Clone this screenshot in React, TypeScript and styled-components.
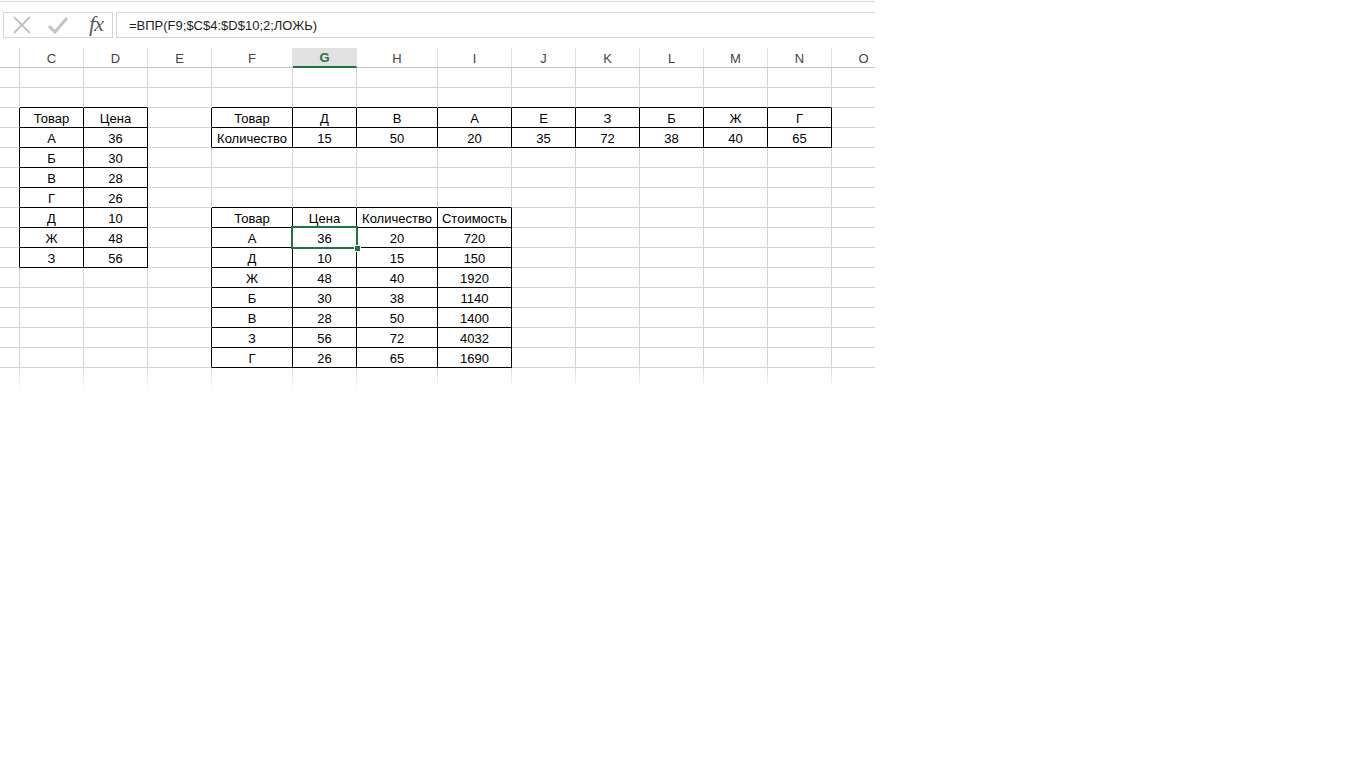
import { createGlobalStyle } from 'styled-components'
import styled from 'styled-components'

const GlobalStyle = createGlobalStyle`
	html, body {
		margin: 0;
		padding: 0;
		background: #ffffff;
	}
	body {
		font-family: 'Liberation Sans', Arial, sans-serif;
	}
`

const GRID = '#d4d4d4'
const GREEN = '#217346'

type Col = { key: string; width: number }

const columns: Col[] = [
	{ key: 'B', width: 20 },
	{ key: 'C', width: 64 },
	{ key: 'D', width: 64 },
	{ key: 'E', width: 64 },
	{ key: 'F', width: 81 },
	{ key: 'G', width: 64 },
	{ key: 'H', width: 81 },
	{ key: 'I', width: 74 },
	{ key: 'J', width: 64 },
	{ key: 'K', width: 64 },
	{ key: 'L', width: 64 },
	{ key: 'M', width: 64 },
	{ key: 'N', width: 64 },
	{ key: 'O', width: 64 },
]

const ROWS = 16
const SELECTED = 'G9'

const values: Record<string, string> = {}

function fillRow(startCol: number, row: number, items: string[]) {
	items.forEach((v, i) => {
		values[columns[startCol + i].key + row] = v
	})
}

fillRow(1, 3, ['Товар', 'Цена'])
;[
	['А', '36'],
	['Б', '30'],
	['В', '28'],
	['Г', '26'],
	['Д', '10'],
	['Ж', '48'],
	['З', '56'],
].forEach((r, i) => fillRow(1, 4 + i, r))

fillRow(4, 3, ['Товар', 'Д', 'В', 'А', 'Е', 'З', 'Б', 'Ж', 'Г'])
fillRow(4, 4, ['Количество', '15', '50', '20', '35', '72', '38', '40', '65'])

fillRow(4, 8, ['Товар', 'Цена', 'Количество', 'Стоимость'])
;[
	['А', '36', '20', '720'],
	['Д', '10', '15', '150'],
	['Ж', '48', '40', '1920'],
	['Б', '30', '38', '1140'],
	['В', '28', '50', '1400'],
	['З', '56', '72', '4032'],
	['Г', '26', '65', '1690'],
].forEach((r, i) => fillRow(4, 9 + i, r))

// bordered ranges: [colFrom, colTo, rowFrom, rowTo]
const tables = [
	[1, 2, 3, 10],
	[4, 12, 3, 4],
	[4, 7, 8, 15],
]

function inTable(c: number, r: number) {
	return tables.some(([c0, c1, r0, r1]) => c >= c0 && c <= c1 && r >= r0 && r <= r1)
}

const Page = styled.div`
	width: 875px;
	overflow: hidden;
	background: #fff;
`

const TopLine = styled.div`
	height: 1px;
	margin-top: 1px;
	background: #dadada;
`

const FormulaBar = styled.div`
	display: flex;
	align-items: stretch;
	gap: 3px;
	height: 26px;
	margin: 10px 0 10px 3px;
`

const ButtonBox = styled.div`
	display: flex;
	align-items: center;
	width: 110px;
	border: 1px solid #d6d6d6;
	box-sizing: border-box;
	background: #fff;
`

const IconSlot = styled.div`
	width: 36px;
	display: flex;
	align-items: center;
	justify-content: center;
`

const Fx = styled.span`
	font-family: 'Liberation Serif', 'Times New Roman', serif;
	font-style: italic;
	font-size: 22px;
	color: #5a5a5a;
	letter-spacing: -1px;
	margin-left: 4px;
	margin-top: -3px;
`

const FormulaInput = styled.div`
	flex: 1;
	display: flex;
	align-items: center;
	padding-left: 12px;
	border: 1px solid #d6d6d6;
	border-right: none;
	font-size: 13px;
	color: #1e1e1e;
`

const Sheet = styled.div<{ $template: string }>`
	display: grid;
	grid-template-columns: ${({ $template }) => $template};
	grid-auto-rows: 20px;
	font-size: 13px;
	color: #000;
`

const HeaderCell = styled.div<{ $active?: boolean; $first?: boolean }>`
	box-sizing: border-box;
	display: flex;
	align-items: center;
	justify-content: center;
	padding-top: 1px;
	font-size: 13px;
	color: ${({ $active }) => ($active ? GREEN : '#444')};
	font-weight: ${({ $active }) => ($active ? 600 : 400)};
	background: ${({ $active }) => ($active ? '#e1e1e1' : '#fff')};
	border-right: 1px solid ${({ $first }) => ($first ? GRID : '#e2e2e2')};
	border-bottom: ${({ $active }) => ($active ? `2px solid ${GREEN}` : '1px solid #c3c3c3')};
`

const Cell = styled.div<{ $right: boolean; $bottom: boolean; $last: boolean }>`
	position: relative;
	box-sizing: border-box;
	display: flex;
	align-items: flex-end;
	justify-content: center;
	padding-bottom: 1px;
	white-space: nowrap;
	border-right: 1px solid ${({ $right }) => ($right ? '#000' : GRID)};
	border-bottom: 1px solid ${({ $bottom, $last }) => ($bottom ? '#000' : $last ? 'transparent' : GRID)};
	${({ $last, $right }) =>
		$last && !$right
			? `border-image: linear-gradient(to bottom, ${GRID}, rgba(212,212,212,0)) 1;
			   border-bottom-width: 0;
			   border-top-width: 0;
			   border-left-width: 0;`
			: ''}
`

const Selection = styled.div`
	position: absolute;
	left: -2px;
	top: -2px;
	right: -2px;
	bottom: -2px;
	border: 2px solid ${GREEN};
	pointer-events: none;
	z-index: 2;
`

const Handle = styled.div`
	position: absolute;
	right: -5px;
	bottom: -5px;
	width: 5px;
	height: 5px;
	background: ${GREEN};
	border: 1px solid #fff;
`

function CrossIcon() {
	return (
		<svg width="20" height="20" viewBox="0 0 20 20">
			<path d="M2 2 L18 18 M18 2 L2 18" stroke="#c2c2c2" strokeWidth="1.8" fill="none" />
		</svg>
	)
}

function CheckIcon() {
	return (
		<svg width="22" height="18" viewBox="0 0 22 18">
			<path d="M2 10 L8 16 L20 2" stroke="#c4c4c4" strokeWidth="3" fill="none" />
		</svg>
	)
}

export default function App() {
	const template = columns.map(c => `${c.width}px`).join(' ')

	const cells = []
	for (let r = 1; r <= ROWS; r++) {
		columns.forEach((col, c) => {
			const id = col.key + r
			const right = inTable(c, r) || inTable(c + 1, r)
			const bottom = inTable(c, r) || inTable(c, r + 1)
			cells.push(
				<Cell key={id} $right={right} $bottom={bottom} $last={r === ROWS}>
					{values[id] ?? ''}
					{id === SELECTED && (
						<Selection>
							<Handle />
						</Selection>
					)}
				</Cell>
			)
		})
	}

	return (
		<>
			<GlobalStyle />
			<Page>
				<TopLine />
				<FormulaBar>
					<ButtonBox>
						<IconSlot>
							<CrossIcon />
						</IconSlot>
						<IconSlot>
							<CheckIcon />
						</IconSlot>
						<IconSlot>
							<Fx>fx</Fx>
						</IconSlot>
					</ButtonBox>
					<FormulaInput>=ВПР(F9;$C$4:$D$10;2;ЛОЖЬ)</FormulaInput>
				</FormulaBar>
				<Sheet $template={template}>
					{columns.map((col, i) => (
						<HeaderCell key={col.key} $first={i === 0} $active={col.key === 'G'}>
							{i === 0 ? '' : col.key}
						</HeaderCell>
					))}
					{cells}
				</Sheet>
			</Page>
		</>
	)
}
